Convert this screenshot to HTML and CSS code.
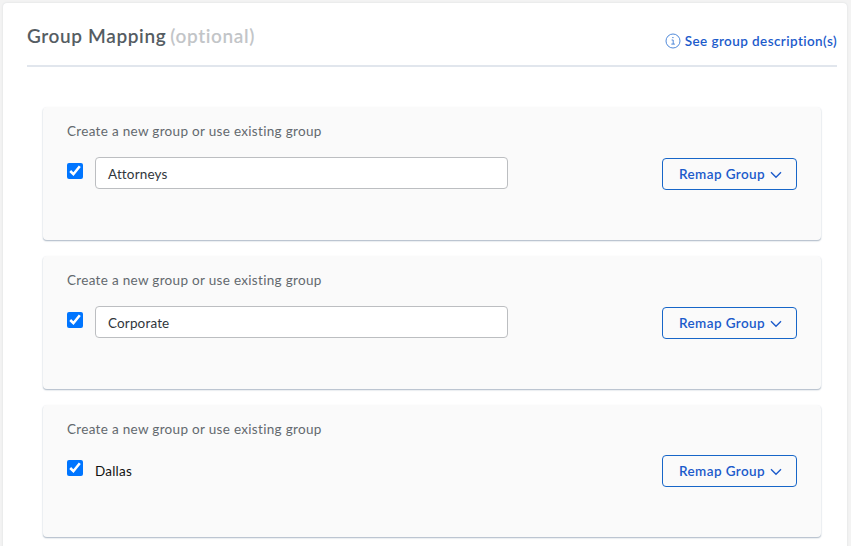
FILE: index.html
```html
<!DOCTYPE html>
<html lang="en">
<head>
<meta charset="utf-8">
<title>Group Mapping</title>
<link rel="stylesheet" href="styles.css">
</head>
<body>
<main class="panel">
  <header class="header">
    <h1 class="title"><span class="title-main">Group Mapping</span><span class="optional">(optional)</span></h1>
    <a class="help">
      <svg class="info" viewBox="0 0 16 16" fill="none" stroke="currentColor"><circle cx="8" cy="8" r="7"/><path d="M7.2 4.6h1.4M6.6 7h1.6v4M6.3 11.1h3.6"/></svg>
      <span class="help-text">See group description(s)</span>
    </a>
  </header>
  <section class="cards">
    <article class="card">
      <p class="label">Create a new group or use existing group</p>
      <div class="row">
        <input class="check" type="checkbox" checked>
        <div class="field">Attorneys</div>
        <button class="remap"><span>Remap Group</span><svg class="chev" viewBox="0 0 12 8"><path d="M1 1.2l5 5 5-5"/></svg></button>
      </div>
    </article>
    <article class="card">
      <p class="label">Create a new group or use existing group</p>
      <div class="row">
        <input class="check" type="checkbox" checked>
        <div class="field">Corporate</div>
        <button class="remap"><span>Remap Group</span><svg class="chev" viewBox="0 0 12 8"><path d="M1 1.2l5 5 5-5"/></svg></button>
      </div>
    </article>
    <article class="card card-plain">
      <p class="label">Create a new group or use existing group</p>
      <div class="row">
        <input class="check" type="checkbox" checked>
        <div class="plain">Dallas</div>
        <button class="remap"><span>Remap Group</span><svg class="chev" viewBox="0 0 12 8"><path d="M1 1.2l5 5 5-5"/></svg></button>
      </div>
    </article>
  </section>
</main>
</body>
</html>
```
FILE: styles.css
```css
* { box-sizing: border-box; }
body {
  margin: 0;
  height: 546px;
  overflow: hidden;
  padding: 3px 4px 0 3px;
  background: #f3f3f3;
  font-family: Lato, "Open Sans", sans-serif;
  font-variant-ligatures: none;
}
.panel {
  height: 560px;
  padding: 0 10px 0 24px;
  background: #fff;
  border-radius: 4px;
  box-shadow: 0 0 2px #d4d7da;
}
.header {
  display: flex;
  justify-content: space-between;
  height: 64px;
  border-bottom: 2px solid #e1e6ed;
}
.title {
  display: flex;
  gap: 4px;
  margin: 0;
  padding-top: 21px;
  font-size: 19px;
  line-height: 24px;
  font-weight: 600;
  letter-spacing: 0.62px;
  color: #555d63;
  white-space: nowrap;
}
.optional { color: #c2c5c8; }
.help {
  display: flex;
  gap: 4px;
  padding-top: 28px;
  color: #1c5bcb;
  font-size: 13.5px;
  line-height: 20px;
  font-weight: 600;
  letter-spacing: 0.41px;
  white-space: nowrap;
}
.info { width: 16px; height: 16px; margin-top: 2px; stroke: #3d7dd6; stroke-width: 0.9; }
.cards {
  display: flex;
  flex-direction: column;
  gap: 16px;
  padding: 40px 16px 0;
}
.card {
  height: 133px;
  padding: 14px 24px 0;
  background: #fafafa;
  border-radius: 4px;
  box-shadow: 0 1px 1px #b9c3cf, 0 1px 2px #cdd3d9;
}
.label {
  margin: 0;
  font-size: 13.5px;
  line-height: 20px;
  letter-spacing: 0.31px;
  color: #63696e;
  white-space: nowrap;
}
.row {
  display: flex;
  align-items: flex-start;
  padding-top: 16px;
}
.check { width: 16px; height: 16px; margin: 6px 12px 0 0; }
.field {
  width: 413px;
  height: 32px;
  padding: 6px 12px 0;
  border: 1px solid #bcbec1;
  border-radius: 4px;
  background: #fff;
  color: #30363b;
  font-size: 13.5px;
  line-height: 20px;
  letter-spacing: 0.15px;
}
.plain { padding-top: 6px; font-size: 13.5px; line-height: 20px; letter-spacing: 0.2px; color: #111; }
.remap {
  display: flex;
  align-items: center;
  gap: 5px;
  width: 135px;
  height: 32px;
  margin: 1px 0 0 auto;
  padding: 0 0 0 16px;
  border: 1px solid #1766c8;
  border-radius: 4px;
  background: #fafafa;
  color: #1c5bcb;
  font: 600 13.5px/20px Lato, "Open Sans", sans-serif;
  letter-spacing: 0.4px;
  white-space: nowrap;
}
.chev { width: 12px; height: 8px; margin-top: 1px; fill: none; stroke: currentColor; stroke-width: 1.4; }
.card-plain { height: 132px; }
.card-plain .check { margin-top: 5px; }
.card-plain .remap { margin-top: 0; }
```
